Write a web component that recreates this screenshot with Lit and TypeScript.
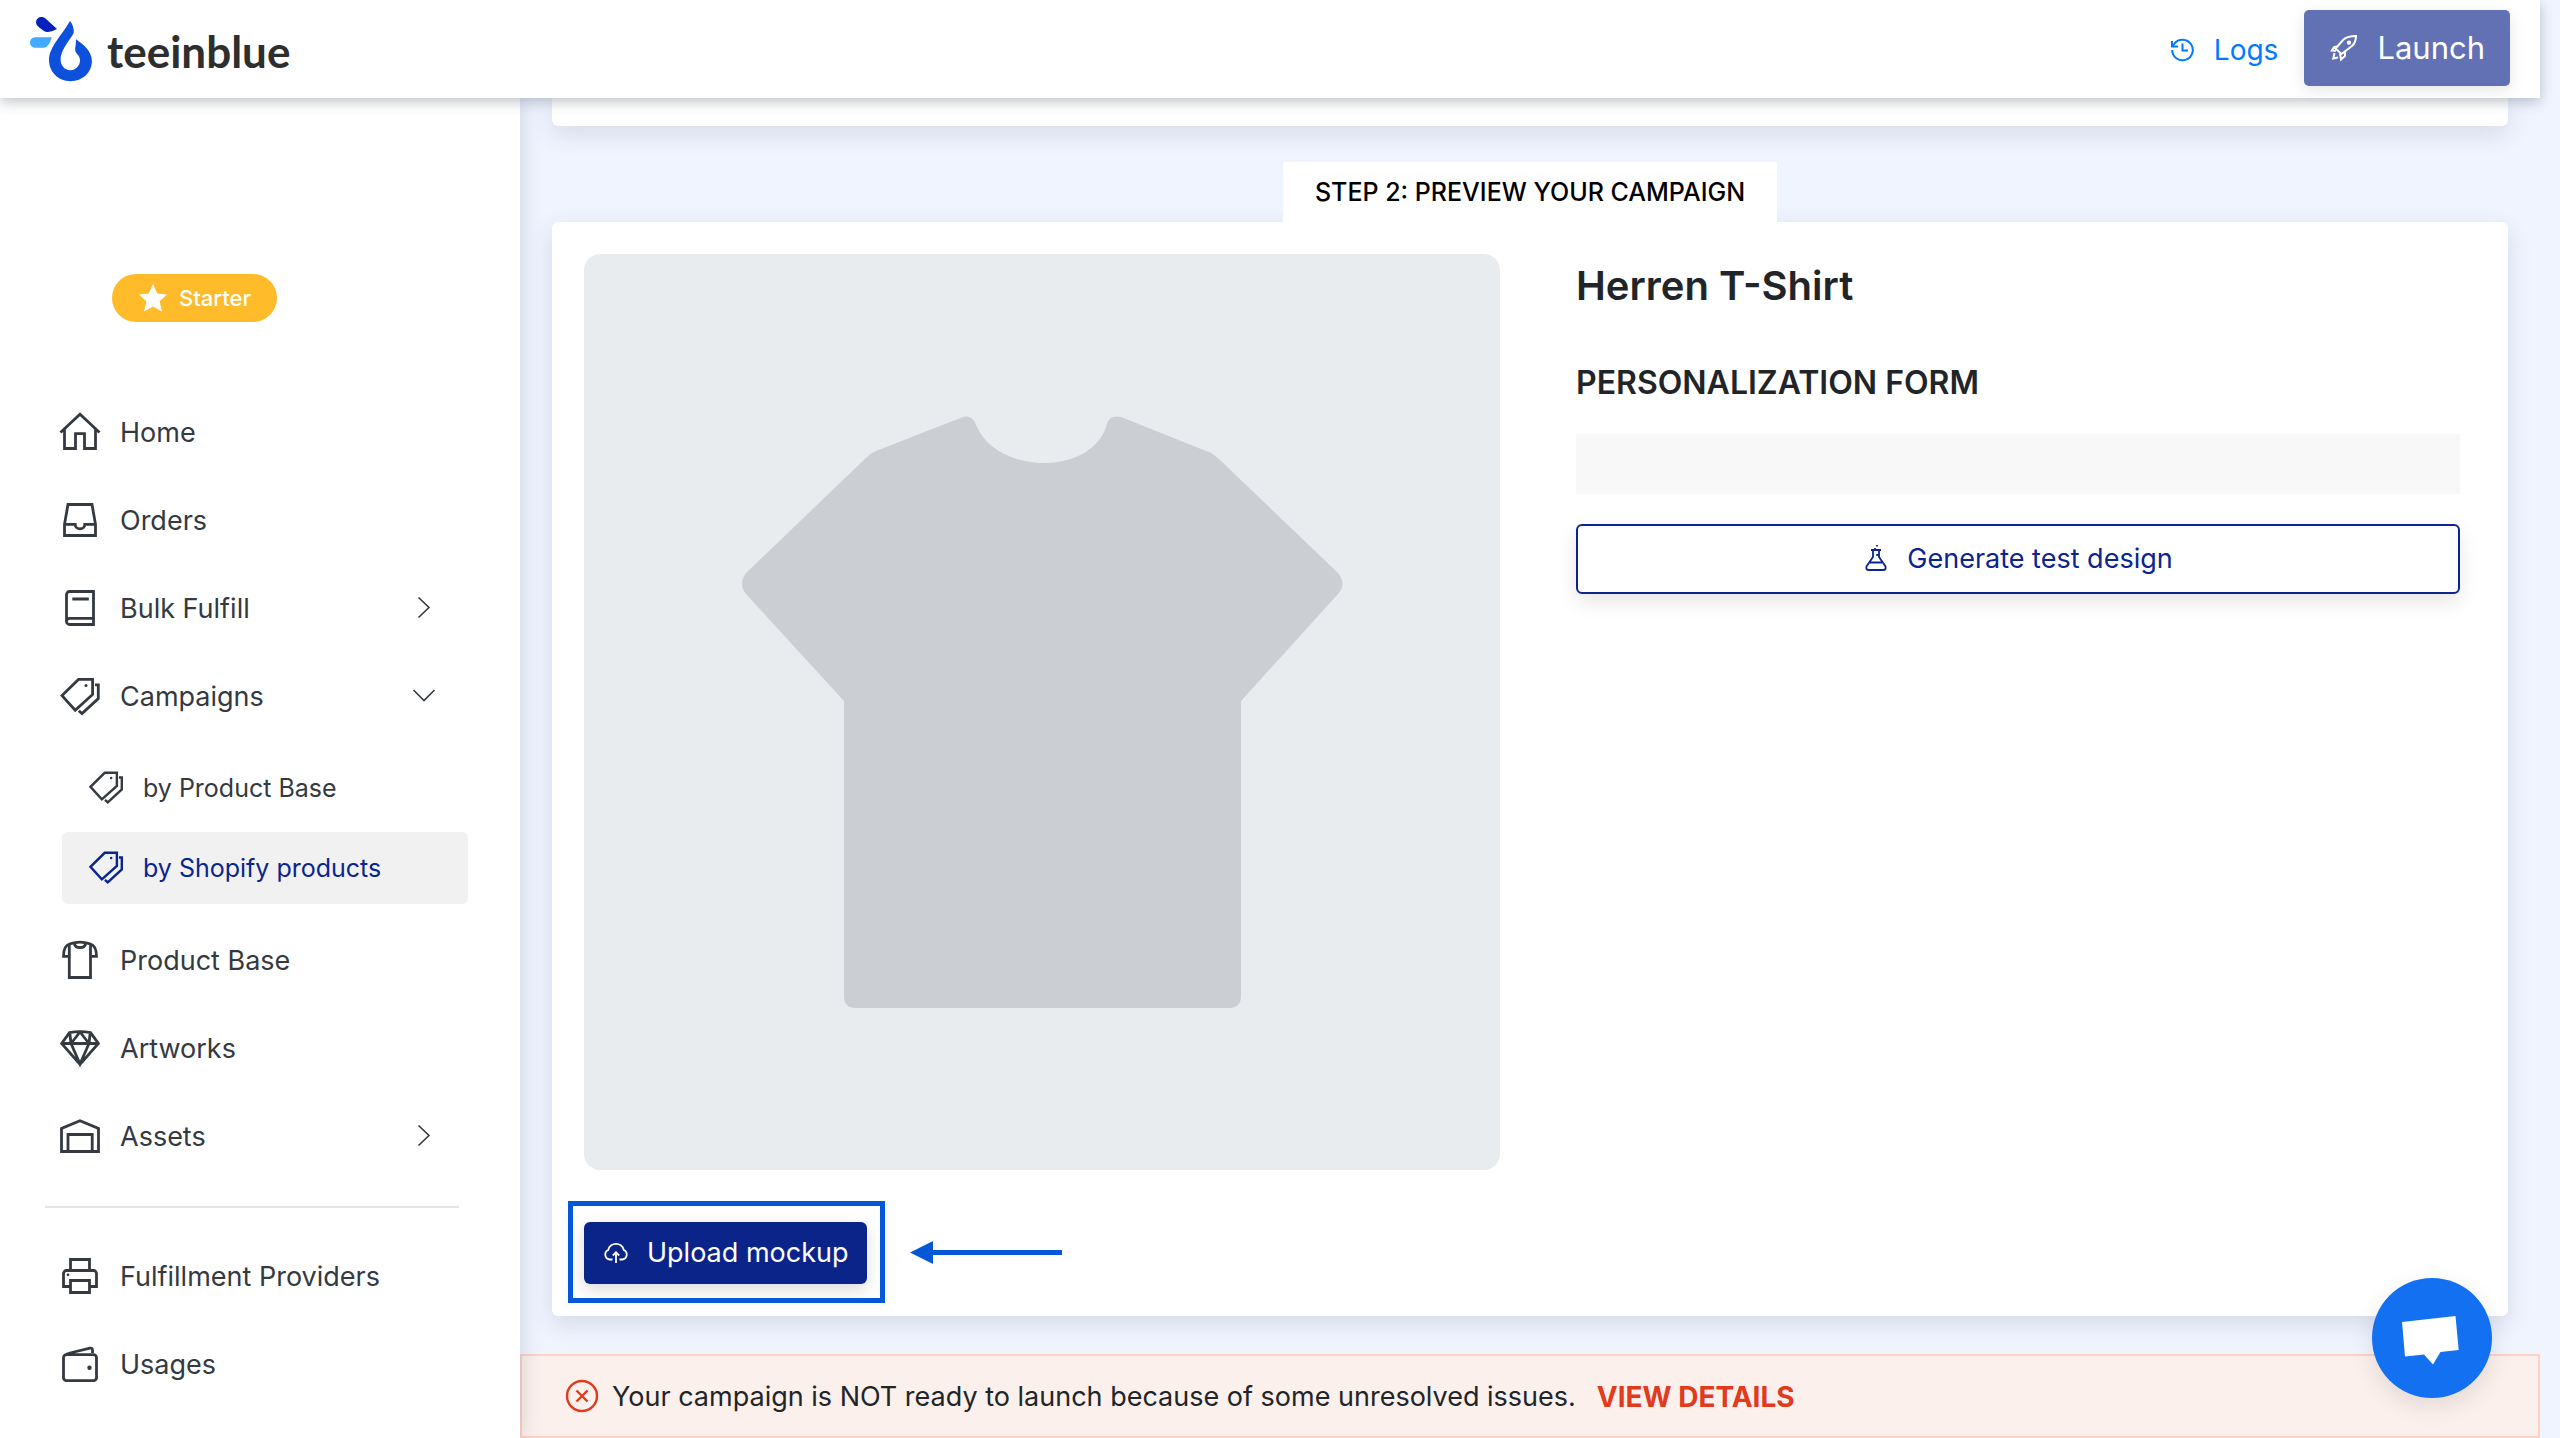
import { LitElement, html, css, svg, nothing } from "lit";
import { customElement, property } from "lit/decorators.js";
import { classMap } from "lit/directives/class-map.js";

const icons: Record<string, unknown> = {
  home: svg`<path d="M2.5 21.5L22 3.2L41.5 21.5M6.5 18.5V37.5H17.5V22.7H26.5V37.5H37.5V18.5"/>`,
  inbox: svg`<path d="M10 5.5H34L37.5 25.3V36.5H6.5V25.3ZM6.5 25.3H17.2A4.8 4.6 0 0 0 26.8 25.3H37.5"/>`,
  book: svg`<path d="M11.5 4.5H35.5V37.5H11.5A3 3 0 0 1 8.5 34.5V7.5A3 3 0 0 1 11.5 4.5ZM8.8 33.5Q9 31.3 12 31.3H35.5M14.3 12H30.8"/>`,
  tags: svg`<path d="M20.5 4.4H34.6V19.5L17.2 35.2L4 20.6ZM37 9.8H40.3V23.6L24 38.6L20.8 35.8"/><circle cx="28" cy="10.5" r="1.5" class="dot"/>`,
  shirt: svg`<path d="M11.3 6V38.5H32.5V6M11.3 17.3H5.5C5.5 11 7 6.4 11.5 5C16 3.8 19 3.2 22 3.2S28 3.8 32.5 5C37 6.4 38.5 11 38.5 17.3H32.5M16.3 4.6A5.8 5 0 0 0 27.7 4.6"/>`,
  diamond: svg`<path d="M3.6 16.5L11.5 5.6Q22 3.8 32.5 5.6L40.4 16.5L22 37.5ZM3.6 16.5H40.4M11.8 5.6L13 16.5L22 37L31 16.5L32.2 5.6M22 5L13 16.5M22 5L31 16.5"/>`,
  depot: svg`<path d="M3.5 36.5V13.5L22 5.8L40.5 13.5V36.5ZM10 36.5V19.5H34.2V36.5"/>`,
  printer: svg`<path d="M12.5 15V4.5H31.5V15M12.5 31.5H5.5V18.5A3 3 0 0 1 8.5 15.5H35.5A3 3 0 0 1 38.5 18.5V31.5H31.5M12.5 25.5H31.5V37.5H12.5Z"/><circle cx="10" cy="19.8" r="1.4" class="dot"/>`,
  wallet: svg`<path d="M8.5 11.7H35.5A3 3 0 0 1 38.5 14.7V34.7A3 3 0 0 1 35.5 37.7H8.5A3 3 0 0 1 5.5 34.7V14.7A3 3 0 0 1 8.5 11.7ZM7 12.5Q8 11 12 10L32 5.2Q34.5 4.6 34.5 7V10"/><circle cx="31.5" cy="24.7" r="2.2" class="dot"/>`,
};

@customElement("nav-icon")
export class NavIcon extends LitElement {
  @property() name = "home";
  static styles = css`
    :host { display: block; flex: none; width: 44px; height: 44px; }
    svg { display: block; width: 100%; height: 100%; fill: none; stroke: currentColor; stroke-width: 2.8; }
    .dot { fill: currentColor; stroke: none; }
  `;
  render() {
    return html`<svg viewBox="0 0 44 44" aria-hidden="true">${icons[this.name]}</svg>`;
  }
}

interface Item {
  label: string;
  icon: string;
  arrow?: "right" | "down";
  children?: { label: string; active?: boolean }[];
}

const mainItems: Item[] = [
  { label: "Home", icon: "home" },
  { label: "Orders", icon: "inbox" },
  { label: "Bulk Fulfill", icon: "book", arrow: "right" },
  {
    label: "Campaigns",
    icon: "tags",
    arrow: "down",
    children: [{ label: "by Product Base" }, { label: "by Shopify products", active: true }],
  },
  { label: "Product Base", icon: "shirt" },
  { label: "Artworks", icon: "diamond" },
  { label: "Assets", icon: "depot", arrow: "right" },
];

const moreItems: Item[] = [
  { label: "Fulfillment Providers", icon: "printer" },
  { label: "Usages", icon: "wallet" },
];

@customElement("side-nav")
export class SideNav extends LitElement {
  static styles = css`
    :host { display: block; box-sizing: border-box; padding: 176px 52px 0 45px; color: #343a40; }
    .plan {
      display: inline-flex; align-items: center; gap: 11px; height: 48px; margin-left: 67px; padding: 0 26px;
      box-sizing: border-box; border-radius: 24px; background: #ffbb29; color: #fff; font-size: 22px; font-weight: 500;
    }
    .plan svg { width: 30px; height: 30px; fill: #fff; }
    ul { list-style: none; margin: 0; padding: 0; }
    .menu { padding-top: 65px; }
    .more { padding-top: 25px; }
    a { display: flex; align-items: center; color: inherit; text-decoration: none; }
    .item { height: 88px; gap: 18px; padding-left: 13px; font-size: 27px; }
    .item span { flex: 1; }
    .chev { width: 24px; height: 24px; margin-right: 32px; fill: none; stroke: currentColor; stroke-width: 1.6; }
    .sub { display: grid; gap: 8px; padding: 11px 0 13px 17px; }
    .sub a { height: 72px; gap: 18px; padding-left: 25px; border-radius: 6px; font-size: 25px; }
    .sub nav-icon { width: 38px; height: 38px; }
    .sub .active { background: #f1f1f1; color: #0b248f; }
    hr { height: 2px; margin: 25px 9px 0 0; border: 0; background: #e4e4e4; }
  `;
  private item(i: Item) {
    return html`<li>
      <a class="item" href="#">
        <nav-icon name=${i.icon}></nav-icon><span>${i.label}</span>
        ${i.arrow
          ? html`<svg class="chev" viewBox="0 0 24 24" aria-hidden="true">
              <path d=${i.arrow === "right" ? "M6.5 0.5L17 10.5L6.5 20.5" : "M1.5 5L12 15.5L22.5 5"} />
            </svg>`
          : nothing}
      </a>
      ${i.children
        ? html`<ul class="sub">
            ${i.children.map(
              (c) => html`<li>
                <a href="#" class=${classMap({ active: !!c.active })}><nav-icon name="tags"></nav-icon>${c.label}</a>
              </li>`
            )}
          </ul>`
        : nothing}
    </li>`;
  }
  render() {
    return html`
      <div class="plan">
        <svg viewBox="0 0 30 30" aria-hidden="true"><path d="M15 1L19.2 10.4L29 11.5L21.6 18.2L24 28.5L15 23.4L6 28.5L8.4 18.2L1 11.5L10.8 10.4Z" /></svg>
        Starter
      </div>
      <nav aria-label="Main">
        <ul class="menu">${mainItems.map((i) => this.item(i))}</ul>
        <hr />
        <ul class="more">${moreItems.map((i) => this.item(i))}</ul>
      </nav>
    `;
  }
}

@customElement("app-root")
export class AppRoot extends LitElement {
  static styles = css`
    :host {
      display: flex; flex-direction: column; min-height: 100vh; box-sizing: border-box; padding-right: 20px;
      background: #f0f4ff; color: #212529; font-family: Inter, "Liberation Sans", sans-serif; font-size: 27px; line-height: 40px;
    }
    button { font: inherit; cursor: pointer; }
    .top {
      position: relative; z-index: 3; display: flex; align-items: center; height: 98px; box-sizing: border-box;
      padding: 0 30px; background: #fff; box-shadow: 0 4px 12px rgba(50, 65, 85, 0.3);
    }
    .brand { display: flex; align-items: center; gap: 15px; margin-right: auto; color: #2e2e2e; text-decoration: none; font-family: Lato, sans-serif; font-size: 44px; font-weight: 700; }
    .brand svg { width: 62px; height: 66px; }
    .brand span { padding-top: 4px; }
    .logs { display: flex; align-items: center; gap: 19px; margin-right: 26px; padding-top: 2px; color: #007bff; text-decoration: none; font-size: 28px; }
    .logs svg { width: 26px; height: 26px; fill: none; stroke: currentColor; stroke-width: 2; }
    .launch {
      display: flex; align-items: center; gap: 18px; height: 76px; margin-bottom: 2px; padding: 0 25px; border: 0; border-radius: 5px;
      background: #6271b3; color: #fff; font-size: 31px; box-shadow: 0 4px 16px rgba(0, 0, 0, 0.1);
    }
    .launch svg { width: 30px; height: 30px; fill: none; stroke: currentColor; stroke-width: 2; }
    .body { display: grid; grid-template-columns: 520px minmax(0, 1fr); flex: 1; }
    side-nav { position: relative; z-index: 2; background: #fff; box-shadow: 2px 0 20px rgba(50, 65, 95, 0.18); }
    main { display: flex; flex-direction: column; }
    .content { flex: 1; padding: 0 32px 38px; }
    .card { background: #fff; border-radius: 6px; box-shadow: 0 8px 24px rgba(50, 60, 80, 0.14); }
    .previous { height: 28px; border-radius: 0 0 6px 6px; }
    .step { display: flex; justify-content: center; padding-top: 36px; }
    .step h2 { position: relative; z-index: 1; margin: 0; padding: 0 32px; background: #fff; color: #000; font-size: 25px; font-weight: 500; line-height: 60px; }
    .preview { display: grid; grid-template-columns: 916fr 884fr; column-gap: 76px; padding: 32px 48px 32px 32px; }
    .mockup { display: block; width: 100%; aspect-ratio: 1; border-radius: 16px; background: #e8ecef; }
    .mockup path { fill: #cbced3; }
    .actions { display: flex; align-items: center; padding-top: 52px; }
    .upload {
      position: relative; display: flex; align-items: center; gap: 17px; height: 62px; padding: 0 18px; border: 0; border-radius: 6px;
      background: #0b248a; color: #fff; box-shadow: 0 6px 16px rgba(0, 0, 0, 0.14);
    }
    .upload::after { content: ""; position: absolute; inset: -21px -18px -19px -16px; border: 5px solid #0458d8; }
    .upload svg { width: 28px; height: 28px; fill: none; stroke: currentColor; stroke-width: 1.8; }
    .arrow { width: 152px; height: 24px; margin-left: 43px; fill: #0458d8; }
    h1 { margin: 8px 0 0; font-size: 40px; font-weight: 600; line-height: 48px; }
    h3 { margin: 53px 0 0; font-size: 32px; font-weight: 600; line-height: 40px; text-transform: uppercase; }
    .field { height: 60px; margin-top: 31px; background: #f8f8f8; }
    .generate {
      display: flex; align-items: center; justify-content: center; gap: 18px; width: 100%; height: 70px; margin-top: 30px;
      border: 2px solid #0b248f; border-radius: 6px; background: #fff; color: #0b248f; box-shadow: 0 8px 20px rgba(0, 0, 0, 0.1);
    }
    .generate svg { width: 26px; height: 28px; fill: none; stroke: currentColor; stroke-width: 1.8; }
    .alert {
      display: flex; align-items: center; height: 84px; box-sizing: border-box; padding: 2px 43px 0; border: 2px solid #ffd0c4;
      background: #fbf0ec;
    }
    .alert svg { width: 34px; height: 34px; margin: 0 13px 2px 0; fill: none; stroke: #e23a1c; stroke-width: 2.4; }
    .alert p { margin: 0; }
    .alert a { margin-left: 21px; color: #e23a1c; font-size: 28px; font-weight: 700; text-decoration: none; }
    .chat {
      position: fixed; right: 68px; bottom: 40px; z-index: 4; width: 120px; height: 120px; padding: 0; border: 0; border-radius: 50%;
      background: #1371f1; box-shadow: 0 8px 24px rgba(0, 0, 0, 0.1);
    }
    .chat svg { display: block; width: 120px; height: 120px; fill: #fff; }
  `;
  render() {
    return html`
      <header class="top">
        <a class="brand" href="#">
          <svg viewBox="30 15 62 66" aria-hidden="true">
            <path fill="#0520bd" d="M37.7 17.4C40 15.2 43.5 15.6 45.5 17.4L57 28Q52 30.8 48 31C45 31 43.5 29.8 38.5 25.7C35.4 23 35.4 19.5 37.7 17.4Z" />
            <path fill="#42abff" d="M36 36.2H52Q48.5 46.6 44 46.8H36C32 46.8 30 44.6 30 41.5S32 36.2 36 36.2Z" />
            <path fill="#0d50dc" d="M70 20C72 22 74.5 28 73.6 32C72.5 36 60.6 48 60.6 58.5C60.6 64.5 64.7 69.2 70.2 69.2C75.7 69.2 80 64.7 80 59.2C80 54 75.8 53 75.2 49.5C75 46 76 43 76.2 38.2C82.5 43 91.9 49.5 91.9 60C91.9 71.5 82.5 80.2 70.5 80.2C58.5 80.2 49 71 49 59C49 46 62 34 70 20Z" />
          </svg>
          <span>teeinblue</span>
        </a>
        <a class="logs" href="#">
          <svg viewBox="2170 36 26 26" aria-hidden="true"><path d="M2173.2 49A10.3 10.3 0 1 0 2175.5 42.5L2173.5 45.5M2173 40V45.6H2179M2183.5 42.5V49.5H2189" /></svg>
          Logs
        </a>
        <button class="launch">
          <svg viewBox="2330 34 30 30" aria-hidden="true">
            <path d="M2357 37C2351.5 37 2347.5 38 2344.5 40.5L2336.5 49.5L2342.5 55L2353 47C2356.5 44 2357 41 2357 37ZM2338.5 47.2L2335 48.2L2332.8 51.5L2337 51.8M2335.5 54L2334.3 59.5L2339 58.5M2341 54.5L2342 60.5L2346 57L2346 52.5" />
            <circle cx="2350" cy="43.6" r="1.2" />
          </svg>
          Launch
        </button>
      </header>
      <div class="body">
        <side-nav></side-nav>
        <main>
          <div class="content">
            <div class="card previous"></div>
            <div class="step"><h2>STEP 2: PREVIEW YOUR CAMPAIGN</h2></div>
            <section class="card preview">
              <div>
                <svg class="mockup" viewBox="584 254 916 916" role="img" aria-label="T-shirt mockup">
                  <path d="M963 417Q973 414 977 427C985 446 1010 463 1044 463C1078 463 1100 446 1106 427Q1108 414 1121 417L1211 453Q1216 456 1220 460L1338 573Q1347 584 1338 594L1241 701V996Q1241 1008 1229 1008H856Q844 1008 844 996V701L746 594Q738 584 746 573L867 457Q871 453 876 451Z" />
                </svg>
                <div class="actions">
                  <button class="upload">
                    <svg viewBox="0 0 28 28" aria-hidden="true"><path d="M10.5 20.5H7.5A5 5 0 0 1 6.2 11A8 8 0 0 1 21.8 11A5 5 0 0 1 20.5 20.5H17.5M14 24V14M10.8 16.5L14 13.3L17.2 16.5" /></svg>
                    Upload mockup
                  </button>
                  <svg class="arrow" viewBox="0 0 152 24" aria-hidden="true"><path d="M0 11.5L23 0V9H152V14H23V23Z" /></svg>
                </div>
              </div>
              <div>
                <h1>Herren T-Shirt</h1>
                <h3>Personalization form</h3>
                <div class="field"></div>
                <button class="generate">
                  <svg viewBox="0 0 26 28" aria-hidden="true"><path d="M8 5H18M10 5V12L3.5 21.5Q2.5 25 6 25H20Q23.5 25 22.5 21.5L16 12V5M7 17.500H19M12 3V4M14 0V1.5M14.2 9V11" /></svg>
                  Generate test design
                </button>
              </div>
            </section>
          </div>
          <div class="alert" role="alert">
            <svg viewBox="0 0 34 34" aria-hidden="true"><circle cx="17" cy="17" r="15" /><path d="M11.5 11.5L22.5 22.5M22.5 11.5L11.5 22.5" /></svg>
            <p>Your campaign is NOT ready to launch because of some unresolved issues.</p>
            <a href="#">VIEW DETAILS</a>
          </div>
        </main>
      </div>
      <button class="chat" aria-label="Chat">
        <svg viewBox="0 0 120 120" aria-hidden="true"><path d="M30 44L83.500 38L86.700 72L68.500 74L61 86.500L52 76.500L33 78.500Z" /></svg>
      </button>
    `;
  }
}
